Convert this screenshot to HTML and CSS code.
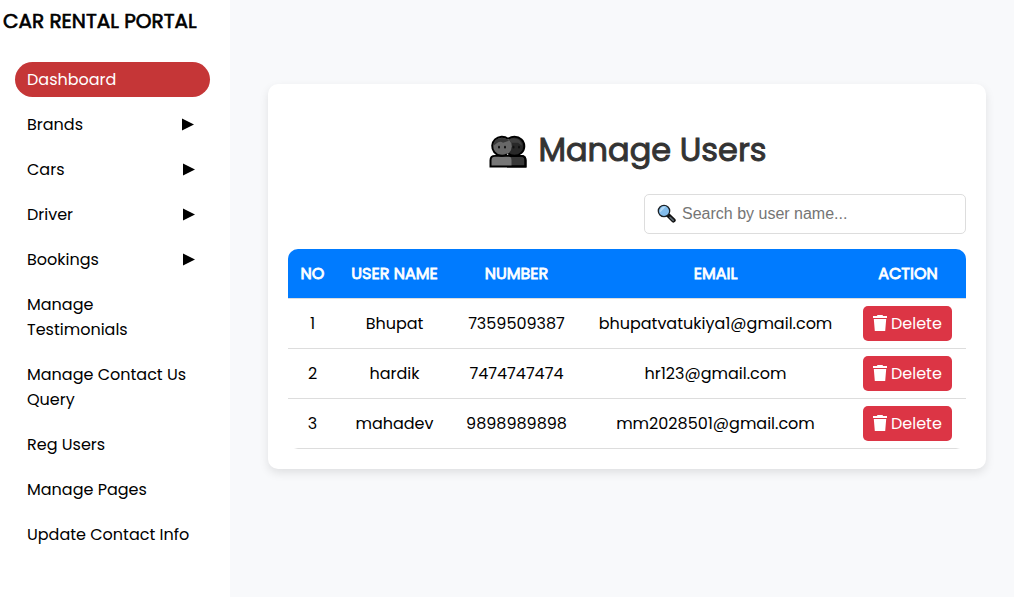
FILE: index.html
```html
<!DOCTYPE html>
<html lang="en">
<head>
<meta charset="utf-8">
<title>Car Rental Portal</title>
<link rel="stylesheet" href="styles.css">
</head>
<body>
<svg width="0" height="0" class="sprite" aria-hidden="true">
  <symbol id="arrow" viewBox="0 0 12 12"><path d="M0 0 12 6 0 12Z"/></symbol>
  <symbol id="trash" viewBox="0 0 14 16"><path d="M4.200 0h5.600v1H14v2H0V1h4.200Z M.8 4h12.400L12.200 16H1.800Z"/></symbol>
</svg>
<div class="layout">
  <aside class="sidebar">
    <div class="brand">CAR RENTAL PORTAL</div>
    <nav class="nav">
      <a class="item active">Dashboard</a>
      <a class="item first-arrow">Brands<svg class="arrow"><use href="#arrow"/></svg></a>
      <a class="item">Cars<svg class="arrow"><use href="#arrow"/></svg></a>
      <a class="item">Driver<svg class="arrow"><use href="#arrow"/></svg></a>
      <a class="item">Bookings<svg class="arrow"><use href="#arrow"/></svg></a>
      <a class="item">Manage<br>Testimonials</a>
      <a class="item">Manage Contact Us<br>Query</a>
      <a class="item">Reg Users</a>
      <a class="item">Manage Pages</a>
      <a class="item">Update Contact Info</a>
    </nav>
  </aside>
  <main class="main">
    <section class="card">
      <h1 class="heading">
        <svg class="people" viewBox="0 0 38 34" preserveAspectRatio="none">
          <g stroke="#000" stroke-width="2">
            <path d="M19 32.500V24.500Q19 21.500 23 21.500H32Q36.500 21.500 36.500 26V32.500Z" fill="#383838"/>
            <path d="M1.500 32.500V26Q1.500 21.500 6 21.500H18Q22.500 21.500 22.500 26V32.500Z" fill="#777" stroke="none"/>
            <path d="M1.500 32.500V26Q1.500 21.500 6 21.500H32Q36.500 21.500 36.500 26V32.500Z" fill="none"/>
            <circle cx="25.500" cy="11.500" r="9.800" fill="#292929"/>
            <circle cx="13" cy="11.500" r="9.800" fill="#686868" stroke="none"/>
            <path d="M19 3.800A9.800 9.800 0 1 0 18 20" fill="none"/>
          </g>
          <path d="M4.500 11Q4.500 3 13 3Q18 3 20 6Q17 7 14 8Q11 5.500 7 9Z" fill="#393939"/>
          <path d="M20 4.500Q25 2 30 5Q33 8 33 11L29 8L22 8Z" fill="#414141"/>
          <g fill="#111"><ellipse cx="10" cy="12.500" rx="1" ry="1.500"/><ellipse cx="16" cy="12.500" rx="1" ry="1.500"/><ellipse cx="24.500" cy="12.500" rx="1" ry="1.500"/><ellipse cx="30" cy="12.500" rx="1" ry="1.500"/></g>
        </svg>
        <span>Manage Users</span>
      </h1>
      <div class="search">
        <svg class="lens" viewBox="0 0 19 19">
          <path d="M11.500 11.500 16.500 16.300" stroke="#111" stroke-width="4.400" stroke-linecap="round"/>
          <path d="M13 13.300 16.200 16.300" stroke="#5b6770" stroke-width="1.700" stroke-linecap="round"/>
          <circle cx="7" cy="7" r="5.700" fill="#83bdec" stroke="#1c2227" stroke-width="1.300"/>
          <path d="M3 8.500A5 5 0 0 1 9 2.600Z" fill="#b4daf7"/>
        </svg>
        <span>Search by user name...</span>
      </div>
      <table class="users">
        <colgroup><col class="c-no"><col class="c-name"><col class="c-num"><col class="c-mail"><col class="c-act"></colgroup>
        <thead>
          <tr><th>NO</th><th>USER NAME</th><th>NUMBER</th><th>EMAIL</th><th>ACTION</th></tr>
        </thead>
        <tbody>
          <tr><td>1</td><td>Bhupat</td><td>7359509387</td><td>bhupatvatukiya1@gmail.com</td><td><button class="delete"><svg class="trash"><use href="#trash"/></svg>Delete</button></td></tr>
          <tr><td>2</td><td>hardik</td><td>7474747474</td><td>hr123@gmail.com</td><td><button class="delete"><svg class="trash"><use href="#trash"/></svg>Delete</button></td></tr>
          <tr><td>3</td><td>mahadev</td><td>9898989898</td><td>mm2028501@gmail.com</td><td><button class="delete"><svg class="trash"><use href="#trash"/></svg>Delete</button></td></tr>
        </tbody>
      </table>
    </section>
  </main>
</div>
</body>
</html>
```

FILE: styles.css
```css
* { box-sizing: border-box; }
body {
  margin: 0;
  background: #f8f9fb;
  color: #000;
  font-family: Poppins, Inter, sans-serif;
  font-size: 16px;
}
.sprite { display: none; }
.layout { display: flex; height: 597px; }
.sidebar { width: 230px; flex: none; background: #fff; }
.brand {
  padding: 6px 0 0 3px;
  height: 62px;
  font-size: 20px;
  font-weight: 400;
  line-height: 30px;
  -webkit-text-stroke: .65px currentColor;
  white-space: nowrap;
}
.nav { display: flex; flex-direction: column; gap: 10px; width: 210px; padding-left: 15px; }
.item {
  position: relative;
  padding: 5px 12px;
  line-height: 25px;
  border-radius: 20px;
  white-space: nowrap;
}
.active { background: #c53637; color: #fff; }
.arrow { position: absolute; right: 15.5px; top: 11px; width: 12px; height: 13px; }
.first-arrow .arrow { right: 16.5px; }
.main { flex: 1; padding: 84px 28px 0 38px; }
.card {
  height: 385px;
  padding: 20px;
  border-radius: 10px;
  background: #fff;
  box-shadow: 0 4px 10px rgba(0, 0, 0, .1);
}
.heading {
  display: flex;
  align-items: center;
  justify-content: center;
  gap: 11px;
  height: 48px;
  margin: 22px 0 20px;
  padding-left: 2px;
  color: #333;
  font-size: 32px;
  font-weight: 400;
  -webkit-text-stroke: .95px currentColor;
}
.people { width: 38px; height: 33px; margin-top: 2px; -webkit-text-stroke: 0; }
.search {
  display: flex;
  align-items: center;
  gap: 6px;
  width: 322px;
  height: 40px;
  margin: 0 0 15px auto;
  padding: 0 12px 1px;
  border: 1px solid #ddd;
  border-radius: 5px;
  color: #757575;
  font-family: "Liberation Sans", Arial, sans-serif;
}
.lens { width: 19px; height: 19px; }
.users {
  width: 678px;
  table-layout: fixed;
  border-collapse: separate;
  border-spacing: 0;
  border-radius: 10px;
  overflow: hidden;
  text-align: center;
}
.c-no { width: 49px; }
.c-name { width: 115px; }
.c-num { width: 129px; }
.c-mail { width: 269px; }
.c-act { width: 116px; }
th, td { height: 50px; padding: 0; border-bottom: 1px solid #ddd; white-space: nowrap; }
th {
  background: #007bff;
  color: #fff;
  font-weight: 400;
  -webkit-text-stroke: .8px currentColor;
}
.delete {
  display: inline-flex;
  align-items: center;
  gap: 4px;
  width: 89px;
  height: 35px;
  margin-right: 1px;
  padding: 0 0 0 10px;
  border: 0;
  border-radius: 5px;
  background: #dc3545;
  color: #fff;
  font: inherit;
  vertical-align: middle;
}
.trash { width: 14px; height: 16px; flex: none; margin-top: -1px; fill: currentColor; }
```
